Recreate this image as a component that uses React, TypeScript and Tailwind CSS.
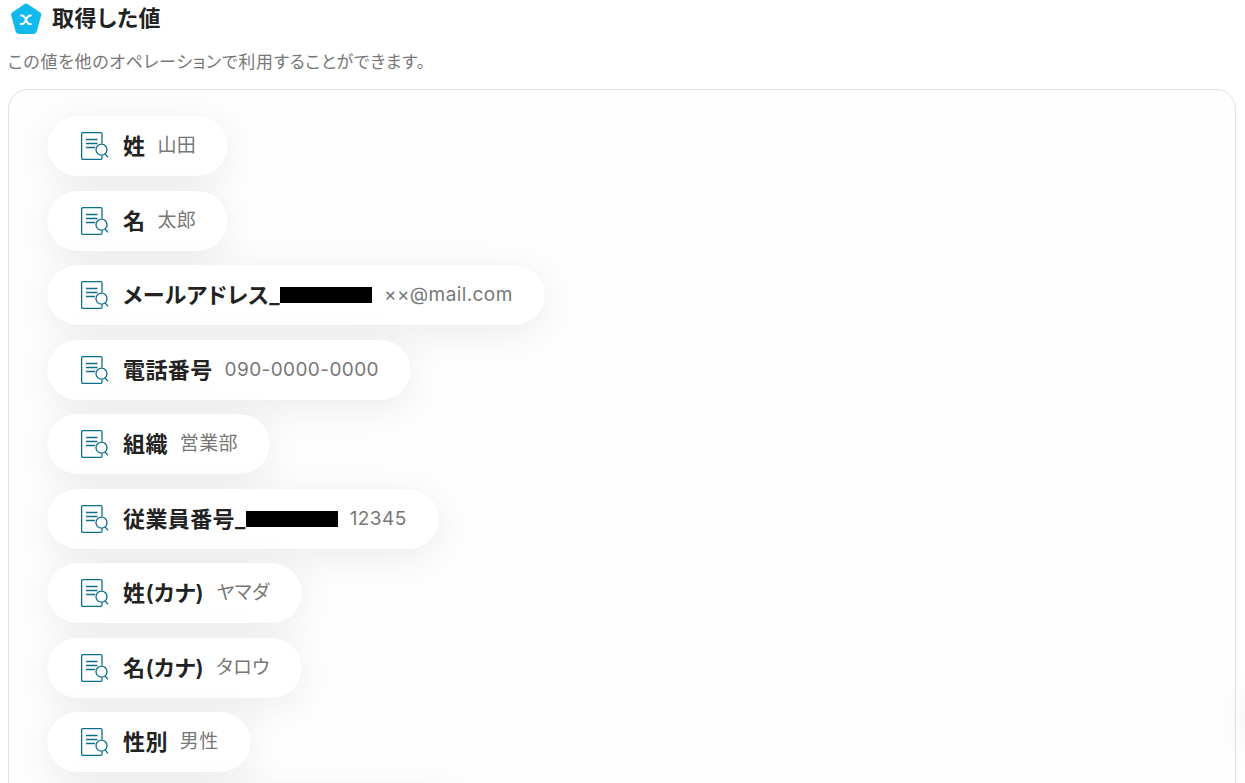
type Field = {
  label: string
  redacted?: boolean
  value: string
}

const fields: Field[] = [
  { label: '姓', value: '山田' },
  { label: '名', value: '太郎' },
  { label: 'メールアドレス_', redacted: true, value: '××@mail.com' },
  { label: '電話番号', value: '090-0000-0000' },
  { label: '組織', value: '営業部' },
  { label: '従業員番号_', redacted: true, value: '12345' },
  { label: '姓(カナ)', value: 'ヤマダ' },
  { label: '名(カナ)', value: 'タロウ' },
  { label: '性別', value: '男性' },
]

function LogoIcon() {
  return (
    <svg className="h-8 w-8 shrink-0" viewBox="0 0 32 32" aria-hidden="true">
      <path
        d="M14.1 2.3a3.4 3.4 0 0 1 3.9 0l12.2 8.3a2.6 2.6 0 0 1 1 3l-4.3 15.5a4 4 0 0 1-3.8 2.9H9.3a4 4 0 0 1-3.8-2.9L1.2 13.6a2.6 2.6 0 0 1 1-3z"
        fill="#12b9ec"
      />
      <path
        d="M11.2 13.6c3-.5 3.800 1.400 4.800 4.200s1.800 4.800 4.800 4.300M20.800 13.600c-2.800-.3-3.800 1.600-4.800 4.200s-2.200 4.600-5.200 4.300"
        fill="none"
        stroke="#fff"
        strokeWidth="2"
        strokeLinecap="round"
      />
    </svg>
  )
}

function RecordIcon() {
  return (
    <svg
      className="h-7 w-7 shrink-0"
      viewBox="0 0 28 28"
      fill="none"
      stroke="#0f6f88"
      strokeWidth="1.3"
      aria-hidden="true"
    >
      <path d="M21 11.5V2a1.4 1.4 0 0 0-1.4-1.4H2A1.4 1.4 0 0 0 .6 2v24A1.4 1.4 0 0 0 2 27.4h17.6A1.4 1.4 0 0 0 21 26v-2.600" />
      <path d="M5 7.5h11.500M5 11.500h11.500M5 15.500h9" />
      <circle cx="20.5" cy="17.700" r="5.500" />
      <path d="M24.2 22l2.800 3.400" />
    </svg>
  )
}

export default function App() {
  return (
    <div className="h-screen overflow-hidden bg-white px-2 font-['Inter','Noto_Sans_CJK_JP',sans-serif] text-[#222]">
      <header className="flex h-9 items-center gap-2.5 pl-0.5">
        <LogoIcon />
        <h1 className="text-[22px] leading-8 font-semibold tracking-wide [font-feature-settings:'palt']">取得した値</h1>
      </header>
      <p className="my-3 text-[17px] leading-[29px] tracking-[0.04em] text-[#777] [font-feature-settings:'palt']">
        この値を他のオペレーションで利用することができます。
      </p>

      <main className="mr-px rounded-[20px] border border-[#e2e2e2] bg-[#fefefe] px-[38px] pt-[26px]">
        <ul className="flex flex-col items-start tracking-wide [font-feature-settings:'palt']">
          {fields.map((field) => (
            <li
              key={field.label}
              className="flex h-[60px] items-center rounded-full bg-white pr-8 pl-[34px] shadow-[0_0_1px_rgba(0,0,0,0.06),0_8px_40px_rgba(0,0,0,0.08)] odd:mb-[15px] even:mb-[14px]"
            >
              <RecordIcon />
              <span className="ml-3.5 flex items-center text-[22px] leading-8 font-semibold">
                {field.label}
                {field.redacted && <span className="h-4 w-[92px] bg-black" />}
              </span>
              <span className="ml-3 text-[19px] leading-7 text-[#777]">{field.value}</span>
            </li>
          ))}
          <li className="h-[60px] w-[420px] rounded-full bg-white shadow-[0_0_1px_rgba(0,0,0,0.06),0_8px_40px_rgba(0,0,0,0.08)]" />
        </ul>
      </main>

      {/* floating help button, parked past the right edge */}
      <div className="fixed top-[690px] -right-16 h-[60px] w-[60px] rounded-full shadow-[0_0_40px_rgba(0,0,0,0.09)]" />
    </div>
  )
}
